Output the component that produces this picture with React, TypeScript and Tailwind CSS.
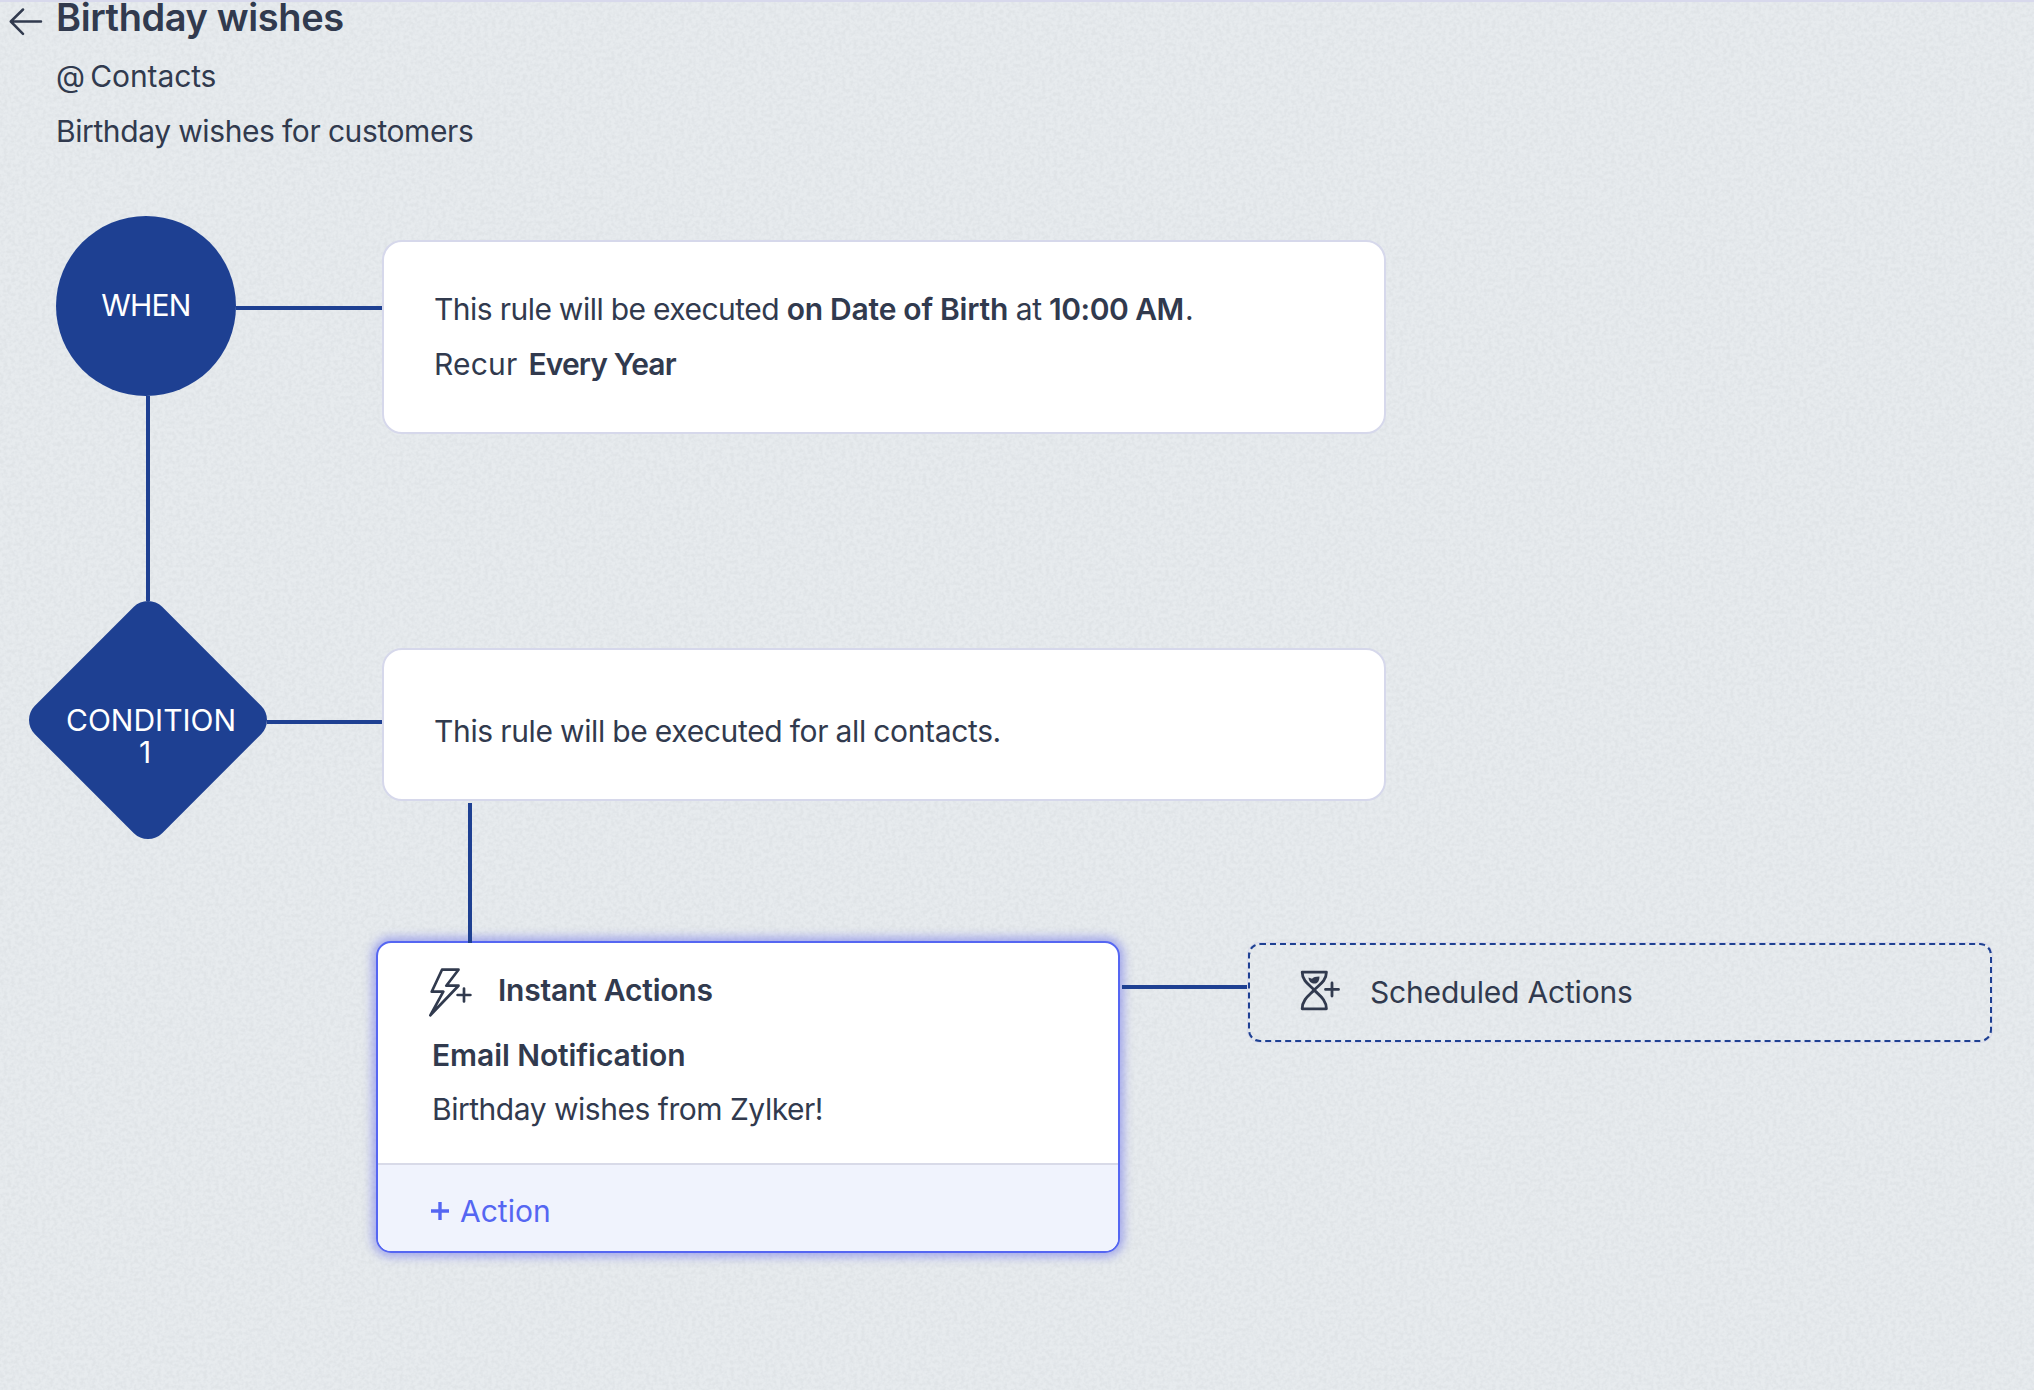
import React from "react";
import { clsx } from "clsx";

interface NodeCardProps {
	className?: string;
	children: React.ReactNode;
}

const ArrowLeftIcon = () => (
	<svg
		width="34"
		height="28"
		viewBox="0 0 34 28"
		fill="none"
		stroke="currentColor"
		strokeWidth="2.5"
		strokeLinecap="round"
		strokeLinejoin="round"
	>
		<path d="M32 13.5H2M14 1.5L1.8 13.5L14 25.8" />
	</svg>
);

const InstantIcon = () => (
	<svg
		width="46"
		height="54"
		viewBox="0 0 46 54"
		fill="none"
		stroke="currentColor"
		strokeWidth="2.7"
		strokeLinejoin="round"
		strokeLinecap="round"
	>
		<path d="M15 6.7H31.5L19.3 22.7H31.5L3.3 52.3L16.3 28.7H4.7Z" />
		<path d="M37 25.6V38.4M30.6 32H43.4" />
	</svg>
);

const ScheduledIcon = () => (
	<svg
		width="42"
		height="49"
		viewBox="0 0 42 49"
		fill="none"
		stroke="currentColor"
		strokeWidth="2.8"
		strokeLinejoin="round"
		strokeLinecap="round"
	>
		<path d="M3.2 4.2H27.4C27.4 13.5 19 17.5 15.2 22C11.4 17.5 3.2 13.5 3.2 4.2Z" />
		<path d="M3.2 40.8H27.4C27.4 31 19 26.5 15.2 22C11.4 26.5 3.2 31 3.2 40.8Z" />
		<path
			d="M9.5 9.6L13 10.8C14.5 9.1 16.5 8.4 20.4 8.4C20.8 12.5 18.6 15.6 15.2 15.6C12 15.6 9.7 13.3 9.5 9.6Z"
			fill="currentColor"
			stroke="none"
		/>
		<path d="M33 15V28M26.5 21.4H39.5" />
	</svg>
);

const PlusIcon = () => (
	<svg
		width="18"
		height="18"
		viewBox="0 0 18 18"
		fill="none"
		stroke="currentColor"
		strokeWidth="3.4"
	>
		<path d="M9 0V18M0 9H18" />
	</svg>
);

// woven paper grain behind the canvas
const Grain = () => (
	<svg className="absolute inset-0 size-full opacity-25" aria-hidden="true">
		<filter
			id="grain"
			x="0"
			y="0"
			width="100%"
			height="100%"
			colorInterpolationFilters="sRGB"
		>
			<feTurbulence
				type="fractalNoise"
				baseFrequency="0.26 0.28"
				numOctaves="2"
				seed="4"
			/>
			<feColorMatrix values="0 0 0 0 0.8  0 0 0 0 0.82  0 0 0 0 0.84  3 0 0 0 -1.1" />
		</filter>
		<rect width="100%" height="100%" filter="url(#grain)" />
	</svg>
);

const Line = ({ className }: { className: string }) => (
	<div className={clsx("shrink-0 bg-[#1e4092]", className)} />
);

const NodeCard = ({ className, children }: NodeCardProps) => (
	<div
		className={clsx(
			"w-[1004px] shrink-0 rounded-[20px] border-2 border-[#d6d8eb] bg-white pl-[50px] leading-[55px]",
			className
		)}
	>
		{children}
	</div>
);

const App = () => {
	return (
		<main className="relative h-[1390px] w-[2034px] overflow-hidden bg-[#e7ebee] font-['Inter',sans-serif] text-[30px] text-[#313a4e] whitespace-nowrap">
			<Grain />
			<div className="relative">
				<div className="h-0.5 bg-[#d8d9ec]" />

				<header className="flex h-[214px] items-start pl-[9px]">
					<div className="mt-1.5 w-[47px]">
						<ArrowLeftIcon />
					</div>
					<div>
						<h1 className="text-[38px] leading-[30px] font-semibold tracking-[-0.4px]">
							Birthday wishes
						</h1>
						<p className="mt-[17px] leading-[55px] tracking-[-0.1px] [word-spacing:-3px]">
							@ Contacts
						</p>
						<p className="leading-[55px] tracking-[-0.4px] [word-spacing:-0.5px]">
							Birthday wishes for customers
						</p>
					</div>
				</header>

				<section className="flex h-[385px] items-start pl-[56px]">
					<div className="flex h-full w-[180px] flex-col">
						<div className="flex size-[180px] shrink-0 items-center justify-center rounded-full bg-[#1e4092] pb-0.5 tracking-[-0.8px] text-white">
							WHEN
						</div>
						<Line className="ml-[90px] h-[205px] w-1" />
					</div>
					<Line className="mt-[90px] h-1 w-[146px]" />
					<NodeCard className="mt-6 h-[194px] pt-10">
						<p className="tracking-[-0.5px] [word-spacing:-0.5px]">
							This rule will be executed{" "}
							<b className="font-semibold tracking-[-0.13px]">
								on Date of Birth
							</b>{" "}
							at{" "}
							<b className="mr-px font-semibold tracking-[-0.4px]">10:00 AM</b>.
						</p>
						<p>
							<span className="mr-[11px] tracking-[0.2px]">Recur</span>
							<b className="font-semibold tracking-[-0.9px]">Every Year</b>
						</p>
					</NodeCard>
				</section>

				<section className="flex h-[340px] items-start pl-[29px]">
					<div className="grid size-[238px] shrink-0 place-items-center">
						<div className="col-start-1 row-start-1 size-[180px] rotate-45 rounded-[20px] bg-[#1e4092]" />
						<p className="relative z-10 col-start-1 row-start-1 mt-[31px] mr-1.5 w-[158px] text-center leading-8 whitespace-normal text-white">
							CONDITION 1
						</p>
					</div>
					<Line className="mt-[119px] h-1 w-[115px]" />
					<div>
						<NodeCard className="mt-[47px] h-[153px] pt-[54px]">
							<p className="tracking-[-0.35px] [word-spacing:-0.7px]">
								This rule will be executed for all contacts.
							</p>
						</NodeCard>
						<Line className="relative z-10 mt-0.5 ml-[86px] h-[140px] w-1" />
					</div>
				</section>

				<section className="flex items-start pl-[376px]">
					<div className="h-[312px] w-[744px] shrink-0 overflow-hidden rounded-[15px] border-2 border-[#5566f2] bg-white shadow-[0_0_10px_4px_rgba(100,105,235,0.5)]">
						<div className="flex h-[85px] items-center gap-[25px] pt-[9px] pl-[49px]">
							<InstantIcon />
							<h2 className="font-semibold tracking-[-0.22px]">
								Instant Actions
							</h2>
						</div>
						<div className="h-[135px] pl-[54px] leading-[54px]">
							<h3 className="font-semibold tracking-[-0.08px]">
								Email Notification
							</h3>
							<p className="tracking-[-0.48px]">Birthday wishes from Zylker!</p>
						</div>
						<button className="flex h-[88px] w-full items-center gap-[11px] border-t-2 border-[#d8dae8] bg-[#f0f3fd] pt-1.5 pl-[53px] text-[#5566f2]">
							<PlusIcon />
							<span>Action</span>
						</button>
					</div>
					<Line className="mt-11 ml-0.5 h-1 w-[126px]" />
					<div className="mt-0.5 flex h-[99px] w-[744px] shrink-0 items-center gap-[29px] rounded-[12px] border-2 border-dashed border-[#1e4092] pl-[49px] shadow-[0_0_0_1px_#d8d9ec]">
						<ScheduledIcon />
						<span className="tracking-[-0.18px]">Scheduled Actions</span>
					</div>
				</section>
			</div>
		</main>
	);
};

export default App;
